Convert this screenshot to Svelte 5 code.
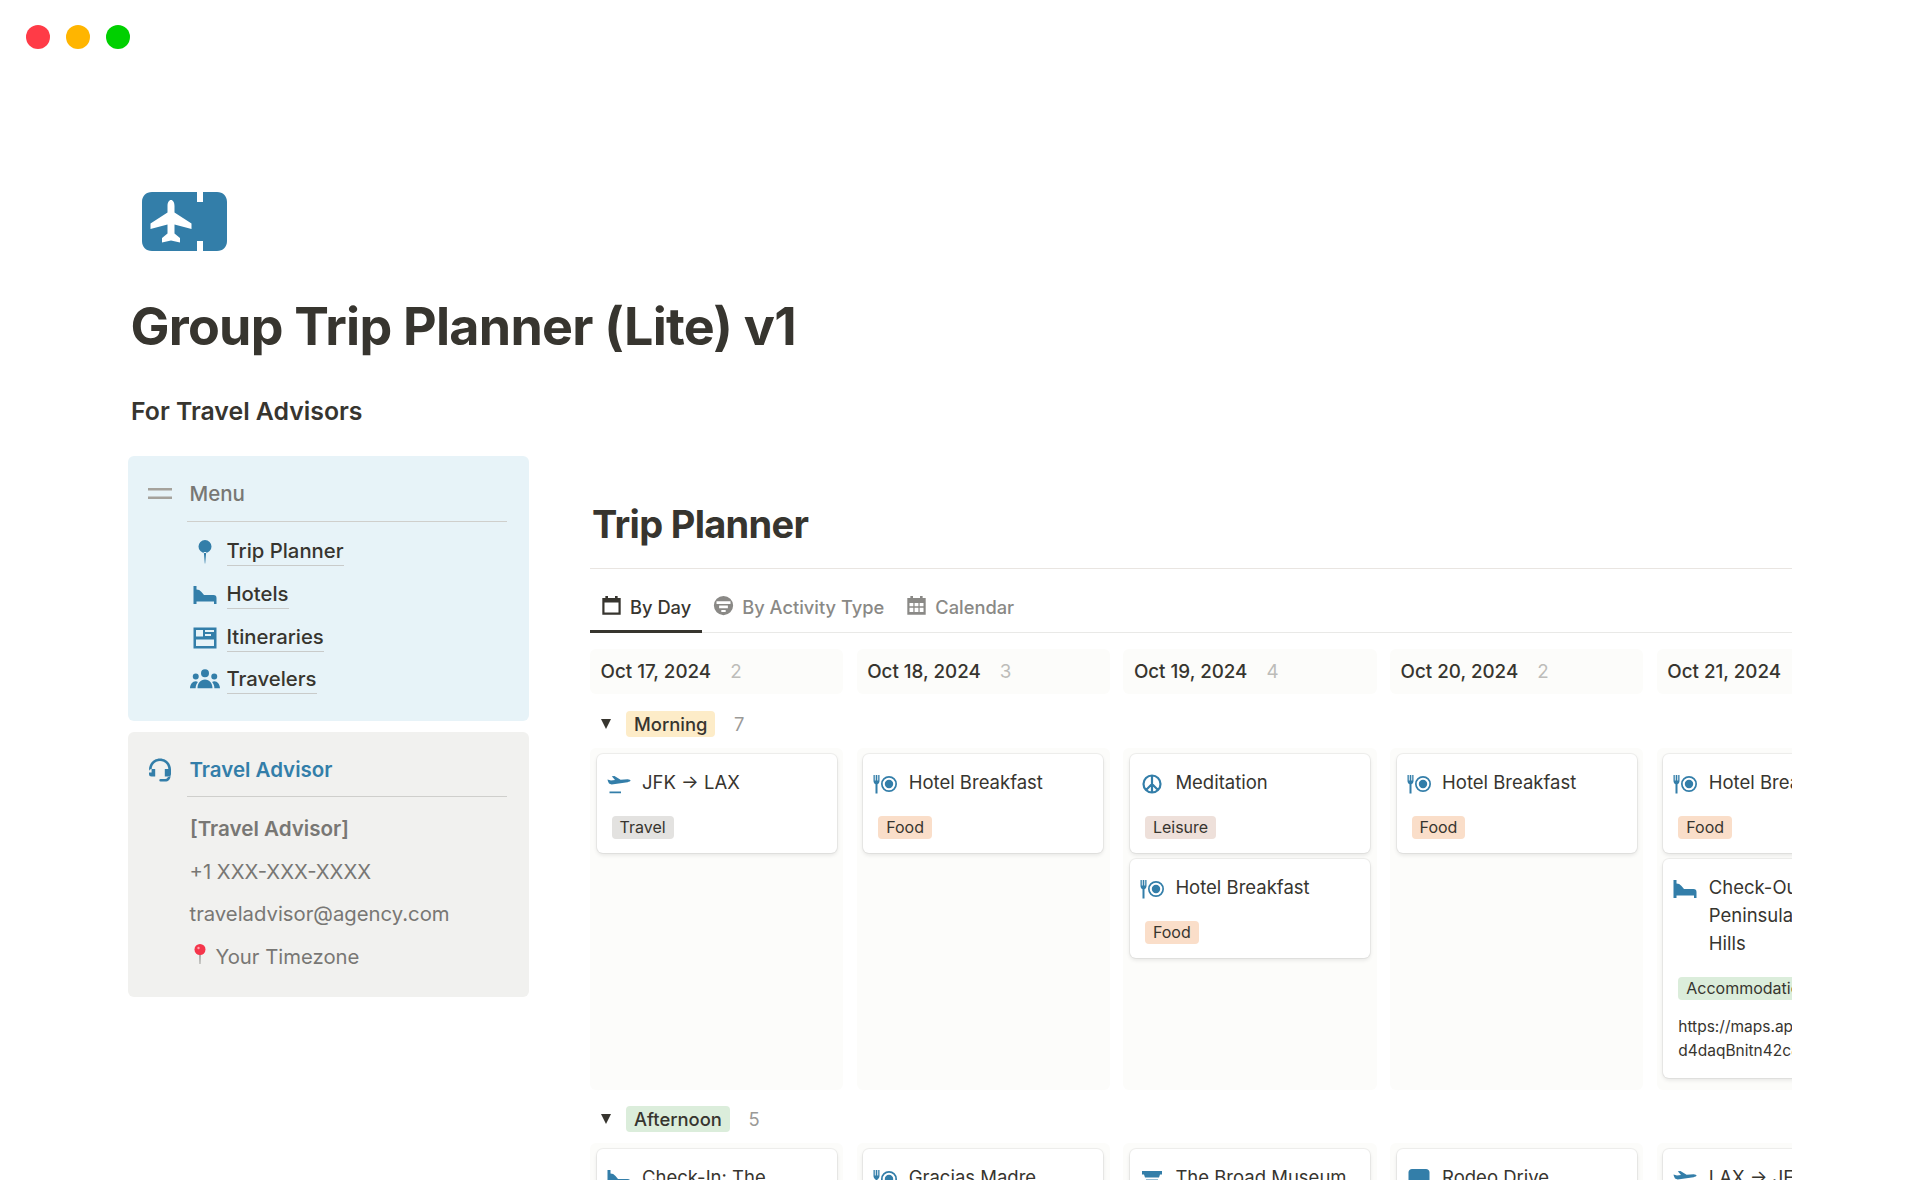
<script lang="ts">
  // icon outlines, all on a 24 box
  const icons: Record<string, string> = {
    pin: 'M12 0a6.5 6.5 0 1 0 0 13a6.5 6.5 0 1 0 0-13z M10.8 12h2.4l-1 11.5h-.4z',
    bed: 'M.5 3h3v3.5c2 0 3.5.8 5 2.5l2.5 3h9.5c2 0 3 1 3 3v6h-2.5v-2.5H3.5V21h-3z',
    news: 'M.5 1.5h23v21H.5z M3 4v6.5h7V4z M12 4v2h9V4z M12 8v2h6V8z M3 13.5V20h18v-6.5z',
    people: 'M12 3.3a3.2 3.2 0 1 0 0 6.4a3.2 3.2 0 1 0 0-6.4z M4.6 6.7a2.4 2.4 0 1 0 0 4.8a2.4 2.4 0 1 0 0-4.8z M19.4 6.7a2.4 2.4 0 1 0 0 4.8a2.4 2.4 0 1 0 0-4.8z M6 18.5c0-4 2.5-7 6-7s6 3 6 7z M0 18.5c.2-3 2-5.5 4.5-5.5.8 0 1.3.2 1.8.5-1.2 1.5-1.8 3-1.8 5z M24 18.5c-.2-3-2-5.5-4.5-5.5-.8 0-1.3.2-1.8.5 1.2 1.5 1.8 3 1.8 5z',
    menu: 'M0 6h24v2.6H0z M0 14.4h24V17H0z',
    headset: 'M12 .5C5.9.5 1 5.4 1 11.5v3h2.6v-3C3.6 6.8 7.3 3 12 3s8.4 3.8 8.4 8.5v3H23v-3C23 5.4 18.1.5 12 .5z M3.5 11h3.7v7.5H3.5a2.5 2.5 0 0 1-2.5-2.5v-2.5A2.5 2.5 0 0 1 3.5 11z M20.5 11h-3.7v7.5h3.7A2.5 2.5 0 0 0 23 16v-2.5A2.5 2.5 0 0 0 20.5 11z M20 18h2.5c0 3.5-2.2 5.5-5.2 5.5H12.6a1.3 1.3 0 0 1 0-2.6h4.7c1.7 0 2.7-1.2 2.7-2.9z',
    calendar: 'M1.5 3.5h3.5V1h3v2.5h8V1h3v2.5h3.5v19h-21z M4 8.5V20h16V8.5z',
    activity: 'M12 1a11 11 0 1 0 0 22a11 11 0 1 0 0-22z M4 7v3.2h16V7z M7 12v3h10v-3z M9.5 17v2.5h5V17z',
    grid: 'M1.5 3.5h3.5V1h3v2.5h8V1h3v2.5h3.5v19h-21z M4 9v3.8h4.4V9z M9.8 9v3.8h4.4V9z M15.6 9v3.8H20V9z M4 14.5v5h4.4v-5z M9.8 14.5v5h4.4v-5z M15.6 14.5v5H20v-5z',
    flight: 'M.5 7.5l3.5 1 4-.5-3.2-3.7 2.6-.2 6.2 3.6 7-.5c1.6 0 3 .8 3 1.4s-1.5 1.4-3 1.6l-16 2.4-2.6-1C1.5 10.2.5 8.5.5 7.5z M2.500 19.500h11.500v1.800H2.500z',
    plate: 'M.5 3v6c0 1.500.8 2.600 2 3.200V21.500h2V12.200c1.200-.6 2-1.700 2-3.200V3H5.200v5.500H4.300V3H2.700v5.500H1.800V3z M16 4a8 8 0 1 0 0 16a8 8 0 1 0 0-16z M16 5.700a6.300 6.300 0 1 1 0 12.600a6.300 6.300 0 1 1 0-12.600z M16 7.800a4.200 4.200 0 1 0 0 8.400a4.200 4.200 0 1 0 0-8.400z',
    peace: 'M12 3.500a8.500 8.500 0 1 0 0 17a8.500 8.500 0 1 0 0-17z M12 3.500v17 M12 12l-6 6 M12 12l6 6',
    museum: 'M2 4h20v3.500h-2l-1 3H5l-1-3H2z M6 12.500h12v6H6z',
    bus: 'M5 2h14c2 0 3.500 1.500 3.500 3.500v9c0 1.500-1 2.500-2.500 2.500H4c-1.500 0-2.500-1-2.500-2.500v-9C1.500 3.500 3 2 5 2z'
  };
  const evenodd = ['news', 'calendar', 'activity', 'grid', 'plate'];

  const menu = [
    { icon: 'pin', label: 'Trip Planner' },
    { icon: 'bed', label: 'Hotels' },
    { icon: 'news', label: 'Itineraries' },
    { icon: 'people', label: 'Travelers' }
  ];

  const days = [
    { date: 'Oct 17, 2024', count: 2 },
    { date: 'Oct 18, 2024', count: 3 },
    { date: 'Oct 19, 2024', count: 4 },
    { date: 'Oct 20, 2024', count: 2 },
    { date: 'Oct 21, 2024', count: 0 }
  ];

  const food = { name: 'Food', cls: 'food' };
  const morning = [
    [{ icon: 'flight', title: 'JFK → LAX', tag: { name: 'Travel', cls: 'travel' } }],
    [{ icon: 'plate', title: 'Hotel Breakfast', tag: food }],
    [
      { icon: 'peace', title: 'Meditation', tag: { name: 'Leisure', cls: 'leisure' } },
      { icon: 'plate', title: 'Hotel Breakfast', tag: food }
    ],
    [{ icon: 'plate', title: 'Hotel Breakfast', tag: food }],
    [
      { icon: 'plate', title: 'Hotel Breakfast', tag: food },
      {
        icon: 'bed',
        title: 'Check-Out: The Peninsula Beverly Hills',
        tag: { name: 'Accommodation', cls: 'stay' },
        url: ['https://maps.app.goo.gl/', 'd4daqBnitn42c8Qa8']
      }
    ]
  ];
  const afternoon = [
    [{ icon: 'bed', title: 'Check-In: The Peninsula' }],
    [{ icon: 'plate', title: 'Gracias Madre' }],
    [{ icon: 'museum', title: 'The Broad Museum' }],
    [{ icon: 'bus', title: 'Rodeo Drive' }],
    [{ icon: 'flight', title: 'LAX → JFK' }]
  ];
</script>

{#snippet icon(name)}
  <svg class="icon" viewBox="0 0 24 24" aria-hidden="true">
    <path
      class:line={name === 'peace'}
      fill-rule={evenodd.includes(name) ? 'evenodd' : 'nonzero'}
      d={icons[name]}
    />
  </svg>
{/snippet}

{#snippet board(columns)}
  <div class="lanes">
    {#each columns as cards}
      <div class="lane">
        {#each cards as card}
          <div class="card">
            <div class="card-title">
              <span class="card-icon">{@render icon(card.icon)}</span>
              <span>{card.title}</span>
            </div>
            {#if card.tag}
              <div class="tag-row"><span class="tag {card.tag.cls}">{card.tag.name}</span></div>
            {/if}
            {#if card.url}
              <div class="url">{card.url[0]}<br />{card.url[1]}</div>
            {/if}
          </div>
        {/each}
      </div>
    {/each}
  </div>
{/snippet}

<div class="page">
  <div class="lights">
    <span class="light red"></span>
    <span class="light amber"></span>
    <span class="light green"></span>
  </div>

  <svg class="logo" viewBox="0 0 85 59" aria-hidden="true">
    <path
      fill-rule="evenodd"
      d="M10 0h45v10h6V0h14c6 0 10 4 10 10v39c0 6-4 10-10 10H61V49h-6v10H10C4 59 0 55 0 49V10C0 4 4 0 10 0z M29 8c-2 0-3.500 2.500-3.500 6v6.500L8.500 31.500v5.500l17-4.500v9l-5.500 4.500v4.500l9-2 9 2v-4.500l-5.500-4.500v-9l17 4.500v-5.500L32.500 20.500V14c0-3.500-1.500-6-3.500-6z"
    />
  </svg>

  <h1>Group Trip Planner (Lite) v1</h1>
  <h2 class="sub">For Travel Advisors</h2>

  <div class="main">
    <aside class="side">
      <section class="callout blue">
        <div class="callout-head">
          <span class="head-icon menu-icon">{@render icon('menu')}</span>
          <span class="menu-title">Menu</span>
        </div>
        <div class="callout-rule"></div>
        <div class="links">
          {#each menu as item}
            <div class="link">
              <span class="link-icon" class:wide={item.icon === 'people'}>{@render icon(item.icon)}</span>
              <span class="link-text">{item.label}</span>
            </div>
          {/each}
        </div>
      </section>

      <section class="callout gray">
        <div class="callout-head">
          <span class="head-icon blue-icon">{@render icon('headset')}</span>
          <span class="advisor-title">Travel Advisor</span>
        </div>
        <div class="callout-rule second"></div>
        <div class="contact">
          <div class="strong">[Travel Advisor]</div>
          <div>+1 XXX-XXX-XXXX</div>
          <div>traveladvisor@agency.com</div>
          <div class="zone">
            <svg class="redpin" viewBox="0 0 12 20" aria-hidden="true">
              <path class="stem" d="M5.200 8h1.600l-.4 12h-.8z" />
              <circle class="head" cx="6" cy="5.500" r="5.500" />
              <circle class="shine" cx="4.500" cy="4" r="1.200" />
            </svg>
            <span>Your Timezone</span>
          </div>
        </div>
      </section>
    </aside>

    <div class="content">
      <h2 class="section-title">Trip Planner</h2>
      <div class="section-rule"></div>

      <div class="tabs">
        <div class="tab active">{@render icon('calendar')}<span>By Day</span></div>
        <div class="tab">{@render icon('activity')}<span>By Activity Type</span></div>
        <div class="tab">{@render icon('grid')}<span>Calendar</span></div>
      </div>

      <div class="day-heads">
        {#each days as day}
          <div class="day">
            <span>{day.date}</span>
            {#if day.count}<span class="day-count">{day.count}</span>{/if}
          </div>
        {/each}
      </div>

      <div class="group-head">
        <span class="caret"></span>
        <span class="pill orange">Morning</span>
        <span class="group-count">7</span>
      </div>
      {@render board(morning)}

      <div class="group-head">
        <span class="caret"></span>
        <span class="pill mint">Afternoon</span>
        <span class="group-count">5</span>
      </div>
      {@render board(afternoon)}
    </div>
  </div>
</div>

<style>
  :global(body) {
    background: #fff;
  }

  .page {
    height: 1180px;
    overflow: hidden;
    padding: 25px 128px 0;
    box-sizing: border-box;
    font-family: Inter, "Liberation Sans", sans-serif;
    color: #37352f;
  }

  .lights {
    display: flex;
    gap: 16px;
    margin-left: -102px;
  }
  .light {
    width: 24px;
    height: 24px;
    border-radius: 50%;
  }
  .red { background: #ff3b47; }
  .amber { background: #ffb500; }
  .green { background: #00d000; }

  .logo {
    display: block;
    width: 85px;
    height: 59px;
    margin: 143px 0 0 13.500px;
    fill: #337ea9;
  }

  h1 {
    margin: 45px 0 0 2.500px;
    font-size: 52px;
    line-height: 62px;
    font-weight: 700;
    letter-spacing: -0.75px;
  }

  .sub {
    margin: 37px 0 0 3px;
    font-size: 24.800px;
    line-height: 32px;
    font-weight: 600;
  }

  .main {
    display: flex;
    gap: 61px;
    margin-top: 29px;
  }

  .side {
    flex: 0 0 401px;
    display: flex;
    flex-direction: column;
    gap: 11px;
  }

  .callout {
    border-radius: 6px;
    height: 265px;
    padding-top: 22px;
    box-sizing: border-box;
  }
  .blue { background: #e7f3f8; }
  .gray { background: #f1f1ef; }

  .callout-head {
    display: flex;
    align-items: center;
    height: 32px;
    padding-left: 20px;
    gap: 17.500px;
  }
  .head-icon {
    display: block;
    width: 24px;
    height: 24px;
  }
  .menu-icon { color: #a5a29c; }
  .blue-icon { color: #337ea9; }
  .menu-title {
    padding-bottom: 2px;
    font-size: 20.500px;
    font-weight: 500;
    color: #787774;
  }
  .advisor-title {
    padding-bottom: 2px;
    font-size: 20.500px;
    font-weight: 600;
    color: #337ea9;
  }

  .callout-rule {
    height: 1px;
    margin: 11px 22px 0 59px;
    background: #cfcfcc;
  }
  .callout-rule.second { margin-top: 10px; }

  .links {
    margin-top: 9px;
  }
  .link {
    display: flex;
    align-items: center;
    height: 42.700px;
    padding-left: 65px;
    gap: 10px;
    font-size: 20.300px;
    font-weight: 500;
  }
  .link-icon {
    display: block;
    flex: 0 0 24px;
    height: 24px;
    color: #337ea9;
  }
  .link-icon.wide {
    flex: 0 0 30px;
    height: 30px;
    margin: 0 -3px;
  }
  .link-text {
    padding-bottom: 2px;
    border-bottom: 1px solid #c9cbca;
    margin-left: -0.500px;
  }

  .contact {
    margin: 10px 0 0 61.500px;
    font-size: 20.300px;
    color: #787774;
  }
  .contact > div {
    display: flex;
    align-items: center;
    height: 42.700px;
  }
  .contact .strong {
    font-weight: 600;
    font-size: 20.600px;
    margin-left: .5px;
  }
  .zone { gap: 10px; }
  .redpin {
    width: 12px;
    height: 20px;
    margin: -4px 0 0 4px;
  }
  .stem { fill: #8f8f8c; }
  .head { fill: #f5364b; }
  .shine { fill: #ffa3ad; }

  .icon {
    display: block;
    width: 100%;
    height: 100%;
    fill: currentColor;
  }
  .line {
    fill: none;
    stroke: currentColor;
    stroke-width: 2.2;
  }

  .content {
    flex: 0 0 1202px;
    width: 1202px;
    overflow: hidden;
  }

  .section-title {
    margin: 43px 0 0 2px;
    font-size: 38px;
    line-height: 50px;
    font-weight: 700;
    letter-spacing: -0.7px;
  }
  .section-rule {
    height: 1px;
    margin-top: 19px;
    background: #e9e5e1;
  }

  .tabs {
    display: flex;
    height: 64px;
    box-sizing: border-box;
    border-bottom: 1px solid #e9e9e7;
    font-size: 18.300px;
    font-weight: 500;
    color: #8a8986;
  }
  .tab {
    display: flex;
    align-items: center;
    gap: 8px;
    padding: 12px 11px 0;
    height: 64px;
    box-sizing: border-box;
  }
  .tab :global(.icon) {
    width: 21px;
    height: 21px;
    margin-top: -3px;
  }
  .tab.active {
    color: #37352f;
    border-bottom: 3px solid #37352f;
    padding-top: 15px;
  }

  .day-heads,
  .lanes {
    display: grid;
    grid-template-columns: repeat(5, 253.200px);
    column-gap: 13.500px;
  }
  .day-heads {
    margin-top: 16px;
  }
  .day {
    display: flex;
    align-items: center;
    gap: 19px;
    height: 45px;
    padding-left: 10.500px;
    background: #fcfcfa;
    border-radius: 6px;
    font-size: 18.800px;
    font-weight: 500;
    white-space: nowrap;
  }
  .day-count {
    font-weight: 400;
    color: #bdbcb9;
  }

  .group-head {
    display: flex;
    align-items: center;
    height: 26px;
    margin-top: 16px;
    font-size: 18.400px;
  }
  .day-heads + .group-head { margin-top: 17px; }
  .caret {
    width: 0;
    height: 0;
    margin: 0 15.500px 0 10.500px;
    border-left: 5.500px solid transparent;
    border-right: 5.500px solid transparent;
    border-top: 10px solid #37352f;
  }
  .pill {
    height: 26px;
    line-height: 26px;
    padding: 0 8px;
    border-radius: 4px;
    font-weight: 500;
  }
  .orange { background: #fdecc8; }
  .mint { background: #dbeddb; }
  .group-count {
    margin-left: 18.500px;
    color: #9b9a97;
  }

  .lanes {
    margin-top: 11px;
  }
  .lane {
    display: flex;
    flex-direction: column;
    gap: 6px;
    padding: 6px 6.500px 12px 6.500px;
    background: #fcfcfa;
    border-radius: 6px;
    min-width: 0;
  }
  .card {
    padding: 14px 15px 14.500px;
    background: #fff;
    border-radius: 6px;
    box-shadow: 0 0 0 1px rgba(15, 15, 15, 0.05), 0 2px 4px rgba(15, 15, 15, 0.1);
  }
  .card-title {
    display: flex;
    gap: 11px;
    margin-left: -5px;
    font-size: 18.500px;
    line-height: 28px;
  }
  .card-title span:last-child {
    padding-left: .5px;
  }
  .card-icon {
    display: block;
    flex: 0 0 24px;
    height: 24px;
    margin-top: 4px;
    color: #337ea9;
  }
  .tag-row {
    display: flex;
    margin-top: 19.500px;
    white-space: nowrap;
  }
  .tag {
    height: 23px;
    line-height: 23px;
    padding: 0 8px;
    border-radius: 4px;
    font-size: 16px;
  }
  .food { background: #fadec9; }
  .travel { background: #e3e2e0; }
  .leisure { background: #eee0da; }
  .stay { background: #dbeddb; }

  .url {
    margin-top: 15.500px;
    font-size: 15.500px;
    line-height: 24px;
    white-space: nowrap;
  }
</style>
